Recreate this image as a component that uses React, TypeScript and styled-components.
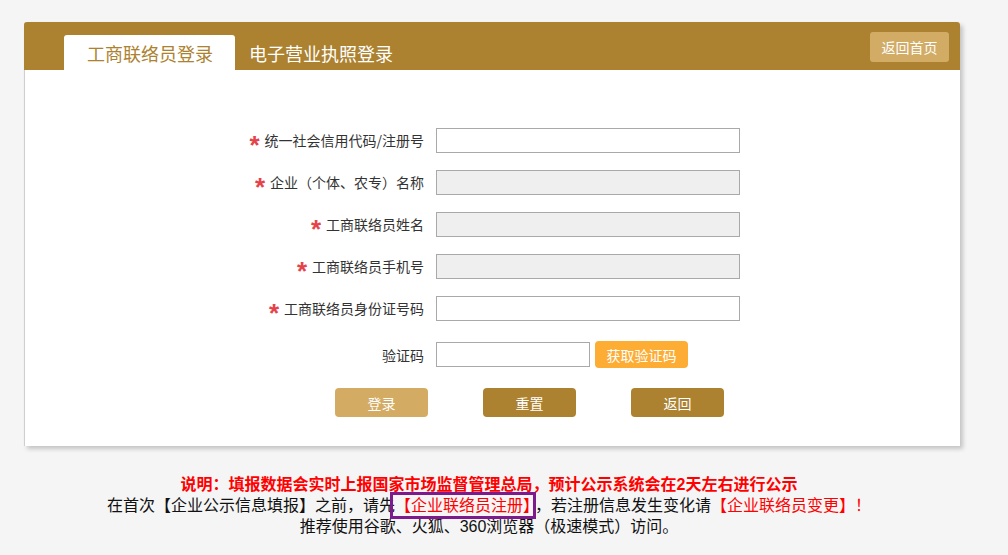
import styled, { createGlobalStyle } from "styled-components";

const GlobalStyle = createGlobalStyle`
  html, body {
    margin: 0;
    padding: 0;
    background: #f5f5f5;
    font-family: "Noto Sans CJK SC", "Liberation Sans", sans-serif;
  }
`;

const Page = styled.div`
  width: 936px;
  margin-left: 24px;
  padding-top: 22px;
`;

const Card = styled.div`
  background: #fff;
  border-left: 1px solid #cfcfcf;
  border-radius: 3px 3px 0 0;
  box-shadow: 3px 3px 4px #c4c4c4;
  padding-bottom: 29px;
`;

const Header = styled.div`
  display: flex;
  align-items: flex-end;
  height: 48px;
  margin-left: -1px;
  padding-left: 40px;
  padding-right: 11px;
  background: #ac8230;
  border-radius: 3px 3px 0 0;
`;

const Tab = styled.div<{ active?: boolean }>`
  height: 35px;
  display: flex;
  align-items: center;
  padding: 0 22px 0 23px;
  border-radius: 3px 3px 0 0;
  background: ${({ active }) => (active ? "#fff" : "transparent")};
  color: ${({ active }) => (active ? "#ac8230" : "#fff")};
  font-size: 18px;
  margin-right: ${({ active }) => (active ? "-9px" : "0")};
  cursor: pointer;
`;

const HomeBtn = styled.button`
  margin-left: auto;
  align-self: flex-start;
  margin-top: 10px;
  width: 79px;
  height: 30px;
  border: none;
  border-radius: 3px;
  background: #d2ab65;
  color: #fff;
  font-family: inherit;
  font-size: 14px;
  cursor: pointer;
`;

const Form = styled.div`
  padding-top: 58px;
  display: flex;
  flex-direction: column;
`;

const Row = styled.div<{ top?: number }>`
  display: flex;
  align-items: center;
  height: 25px;
  margin-top: ${({ top }) => top ?? 17}px;
  &:first-child {
    margin-top: 0;
  }
`;

const Label = styled.label`
  width: 399px;
  margin-right: 12px;
  text-align: right;
  font-size: 14px;
  color: #333;
  white-space: nowrap;
`;

const Star = styled.span`
  color: #e5424a;
  font-size: 26px;
  line-height: 14px;
  font-family: "Liberation Sans", sans-serif;
  font-weight: bold;
  vertical-align: -8px;
  margin-right: 5px;
`;

const Input = styled.input<{ disabledLook?: boolean; w?: number }>`
  box-sizing: border-box;
  width: ${({ w }) => w ?? 304}px;
  height: 25px;
  border: 1px solid #a9a9a9;
  background: ${({ disabledLook }) => (disabledLook ? "#efefef" : "#fff")};
  padding: 0 4px;
  font-family: inherit;
  font-size: 14px;
  outline: none;
`;

const CodeBtn = styled.button`
  margin-left: 5px;
  width: 93px;
  height: 27px;
  border: none;
  border-radius: 4px;
  background: #fdac34;
  color: #fff;
  font-family: inherit;
  font-size: 14px;
  cursor: pointer;
`;

const Actions = styled.div`
  display: flex;
  gap: 55px;
  margin-top: 21px;
  padding-left: 310px;
`;

const ActionBtn = styled.button<{ light?: boolean }>`
  width: 93px;
  height: 29px;
  border: none;
  border-radius: 4px;
  background: ${({ light }) => (light ? "#d3ab63" : "#ac8230")};
  color: #fff;
  font-family: inherit;
  font-size: 14px;
  cursor: pointer;
`;

const Notes = styled.div`
  margin-top: 28px;
  text-align: center;
  font-family: "Liberation Sans", "Noto Sans CJK SC", sans-serif;
  font-size: 16px;
  line-height: 21px;
  color: #111;
  margin-left: -6px;
`;

const Warn = styled.div`
  color: #f00;
  font-weight: bold;
  font-size: 16px;
`;

const Line = styled.div`
  white-space: nowrap;
`;

const Red = styled.span`
  color: #f00;
`;

const Boxed = styled(Red)`
  outline: 3px solid #7d1a8c;
  outline-offset: 2px;
  margin-right: 4px;
`;

const fields = [
  { label: "统一社会信用代码/注册号", gray: false },
  { label: "企业（个体、农专）名称", gray: true },
  { label: "工商联络员姓名", gray: true },
  { label: "工商联络员手机号", gray: true },
  { label: "工商联络员身份证号码", gray: false },
];

export default function App() {
  return (
    <>
      <GlobalStyle />
      <Page>
        <Card>
          <Header>
            <Tab active>工商联络员登录</Tab>
            <Tab>电子营业执照登录</Tab>
            <HomeBtn>返回首页</HomeBtn>
          </Header>

          <Form>
            {fields.map((f) => (
              <Row key={f.label}>
                <Label>
                  <Star>*</Star>
                  {f.label}
                </Label>
                <Input disabledLook={f.gray} readOnly={f.gray} />
              </Row>
            ))}
            <Row top={21}>
              <Label>验证码</Label>
              <Input w={154} />
              <CodeBtn>获取验证码</CodeBtn>
            </Row>
          </Form>

          <Actions>
            <ActionBtn light>登录</ActionBtn>
            <ActionBtn>重置</ActionBtn>
            <ActionBtn>返回</ActionBtn>
          </Actions>
        </Card>

        <Notes>
          <Warn>说明：填报数据会实时上报国家市场监督管理总局，预计公示系统会在2天左右进行公示</Warn>
          <Line>
            在首次【企业公示信息填报】之前，请先<Boxed>【企业联络员注册】</Boxed>，若注册信息发生变化请
            <Red>【企业联络员变更】！</Red>
          </Line>
          <Line>推荐使用谷歌、火狐、360浏览器（极速模式）访问。</Line>
        </Notes>
      </Page>
    </>
  );
}
